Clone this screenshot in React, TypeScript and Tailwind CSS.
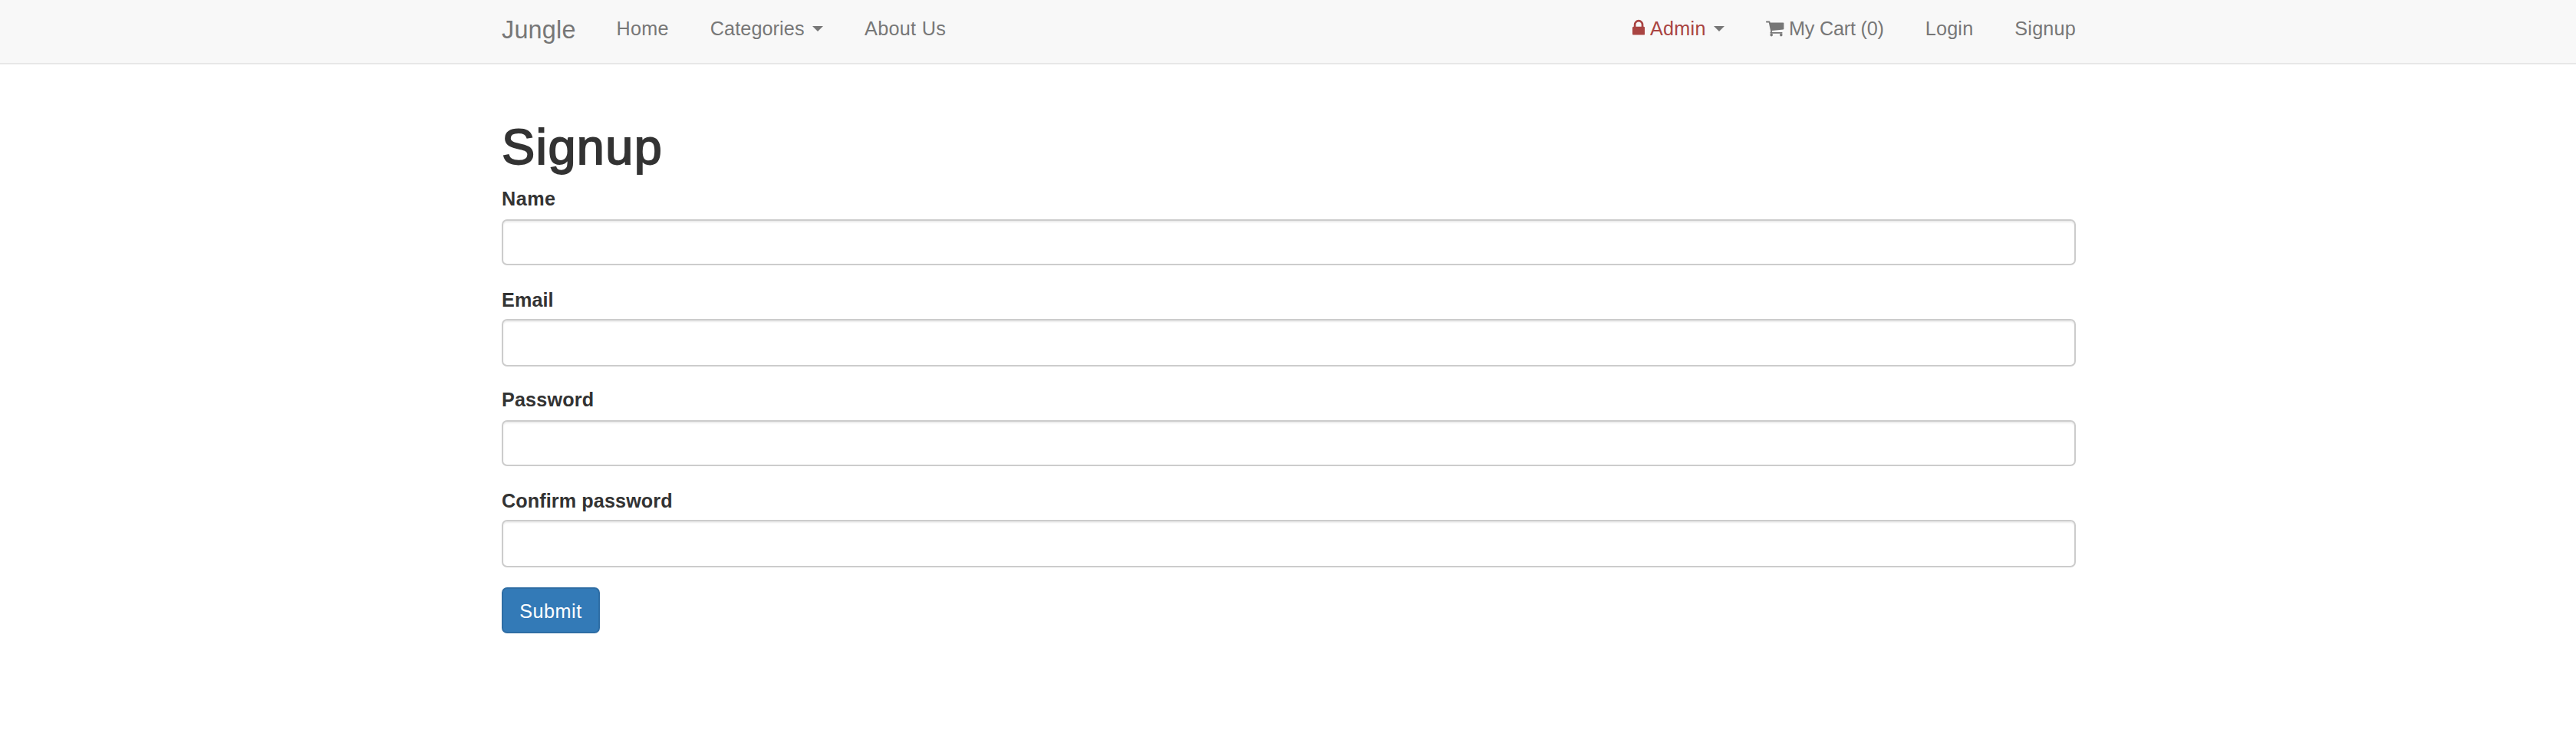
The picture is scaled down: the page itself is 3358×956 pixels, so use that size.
import React from "react";

const lockPath =
  "M320 768h512v192q0 106 -75 181t-181 75t-181 -75t-75 -181v-192zM1152 672v-576q0 -40 -28 -68t-68 -28h-960q-40 0 -68 28t-28 68v576q0 40 28 68t68 28h32v192q0 184 132 316t316 132t316 -132t132 -316v-192h32q40 0 68 -28t28 -68z";
const cartPath =
  "M640 0q0 -52 -38 -90t-90 -38t-90 38t-38 90t38 90t90 38t90 -38t38 -90zM1536 0q0 -52 -38 -90t-90 -38t-90 38t-38 90t38 90t90 38t90 -38t38 -90zM1664 1088v-512q0 -24 -16.5 -42.5t-40.5 -21.5l-1044 -122q13 -60 13 -70q0 -16 -24 -64h920q26 0 45 -19t19 -45t-19 -45t-45 -19h-1024q-26 0 -45 19t-19 45q0 11 8 31.5t16 36t21.5 40t15.5 29.5l-177 823h-204q-26 0 -45 19t-19 45t19 45t45 19h256q16 0 28.5 -6.5t19.5 -15.5t13 -24.5t8 -26t5.5 -29.5t4.5 -26h1201q26 0 45 -19t19 -45z";

function Caret() {
  return (
    <svg viewBox="0 0 14 7" className="mt-[15px] ml-[10.5px] h-[7px] w-[14px] shrink-0" fill="currentColor">
      <path d="M0 0h14L7 7z" />
    </svg>
  );
}

function Icon({ d, units, className }: { d: string; units: number; className: string }) {
  return (
    <svg viewBox={`0 -1536 ${units} 1792`} className={className} fill="currentColor">
      <path d={d} transform="scale(1 -1)" />
    </svg>
  );
}

function NavLink({ children, className = "" }: { children: React.ReactNode; className?: string }) {
  return (
    <a href="#" className={`flex h-9 items-start px-[27px] whitespace-nowrap ${className}`}>
      {children}
    </a>
  );
}

const fields = [
  { id: "name", label: "Name", type: "text", labelClass: "h-[46px] tracking-[0.5px]", inputClass: "h-[60px]" },
  { id: "email", label: "Email", type: "email", labelClass: "mt-[26px] h-[44px] tracking-[0.1px]", inputClass: "h-[62px]" },
  { id: "password", label: "Password", type: "password", labelClass: "mt-[24px] h-[46px] tracking-[0.15px]", inputClass: "h-[60px]" },
  { id: "confirm", label: "Confirm password", type: "password", labelClass: "mt-[26px] h-[44px] tracking-[0.1px]", inputClass: "h-[62px]" },
];

export default function App() {
  return (
    <div className="min-h-[956px] bg-white font-['Liberation_Sans',Arial,sans-serif] text-[25.2px] leading-9 text-[#333]">
      <nav className="h-[84px] border-b-2 border-[#e7e7e7] bg-[#f8f8f8] pl-0.5 text-[#777]">
        <div className="mx-auto flex w-[2052px] items-start pt-[19px]">
          <a href="#" className="mr-[27px] w-[95.4px] pt-[2px] text-[32.4px] leading-9 tracking-[0.2px]">
            Jungle
          </a>
          <NavLink className="tracking-[0.3px]">Home</NavLink>
          <NavLink className="tracking-[0.1px]">
            Categories
            <Caret />
          </NavLink>
          <NavLink className="tracking-[0.3px]">About Us</NavLink>
          <div className="-mr-[27px] ml-auto flex">
            <NavLink className="tracking-[0.3px]">
              <span className="flex text-[#a94442]">
                <Icon d={lockPath} units={1152} className="mt-[5.4px] mr-[7px] h-[25.2px] w-[16.2px]" />
                Admin
              </span>
              <Caret />
            </NavLink>
            <NavLink className="tracking-[-0.2px]">
              <Icon d={cartPath} units={1664} className="mt-[5.4px] mr-[6.3px] h-[25.2px] w-[23.4px]" />
              My Cart (0)
            </NavLink>
            <NavLink className="tracking-[0.2px]">Login</NavLink>
            <NavLink className="tracking-[0.2px]">Signup</NavLink>
          </div>
        </div>
      </nav>
      <main className="pt-[72px] pl-0.5">
        <div className="mx-auto w-[2052px]">
          <h1 className="mb-[13px] h-[71px] text-[64.8px] leading-[71px] tracking-[1.4px] [-webkit-text-stroke:1.8px_#333]">
            Signup
          </h1>
          <form className="flex flex-col items-start" onSubmit={(e) => e.preventDefault()}>
            {fields.map((f) => (
              <React.Fragment key={f.id}>
                <label htmlFor={f.id} className={`block pt-px font-bold ${f.labelClass}`}>
                  {f.label}
                </label>
                <input
                  id={f.id}
                  type={f.type}
                  className={`w-full rounded-[7px] border-2 border-[#ccc] bg-white px-[21px] shadow-[inset_0_2px_2px_rgba(0,0,0,0.075)] outline-none ${f.inputClass}`}
                />
              </React.Fragment>
            ))}
            <button
              type="submit"
              className="mt-[26px] h-[60px] w-[128px] rounded-[7px] border-2 border-[#2e6da4] bg-[#337ab7] pt-0.5 text-center leading-9 tracking-[0.5px] text-white"
            >
              Submit
            </button>
          </form>
        </div>
      </main>
    </div>
  );
}
